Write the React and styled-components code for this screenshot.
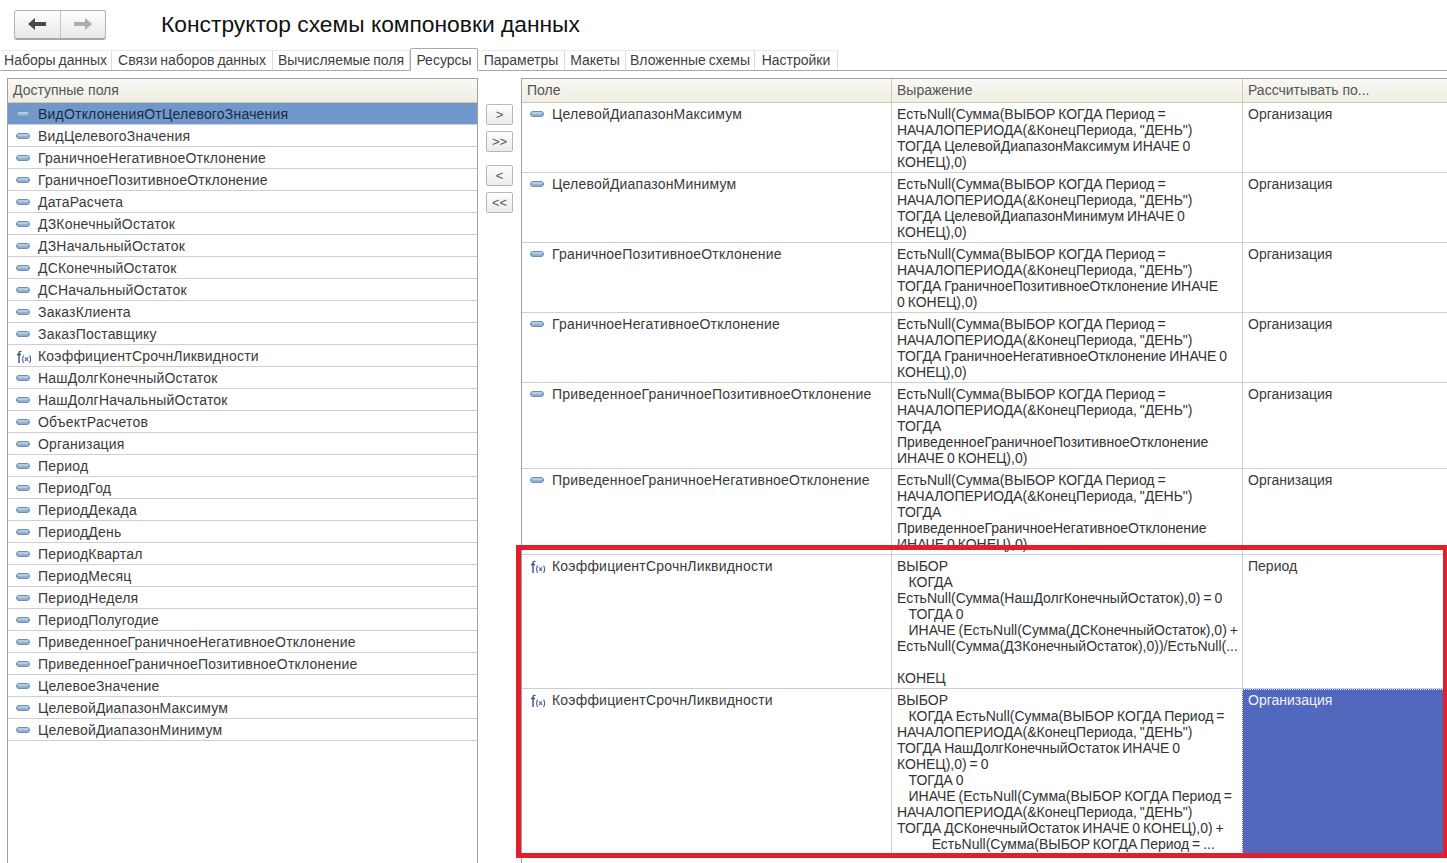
import React from "react";
import styled, { createGlobalStyle } from "styled-components";

const GlobalStyle = createGlobalStyle`
  html, body {
    margin: 0;
    padding: 0;
    background: #fff;
  }
  body {
    font-family: "Liberation Sans", Arial, sans-serif;
    font-size: 14px;
    color: #3a3a3a;
  }
`;

const Page = styled.div`
  position: relative;
  width: 1447px;
  height: 863px;
  overflow: hidden;
  background: #fff;
`;

const TopBar = styled.div`
  display: flex;
  align-items: center;
  height: 49px;
  padding: 0 0 0 14px;
  box-sizing: border-box;
`;

const NavGroup = styled.div`
  display: flex;
  width: 92px;
  height: 30px;
  box-sizing: border-box;
  border: 1px solid #b4b4b4;
  border-bottom: 2px solid #a8a8a8;
  border-radius: 3px;
  background: linear-gradient(#fdfdfd, #e9e9e9);
`;

const NavButton = styled.div`
  display: flex;
  align-items: center;
  justify-content: center;
  flex: 1;
  & + & {
    border-left: 1px solid #c4c4c4;
  }
`;

const Title = styled.h1`
  margin: 0 0 0 55px;
  font-size: 22.8px;
  font-weight: 400;
  color: #111;
`;

const TabBar = styled.div`
  display: flex;
  height: 22px;
  box-sizing: border-box;
  border-bottom: 1px solid #a9a9a9;
`;

const Tab = styled.div`
  box-sizing: border-box;
  height: 20px;
  margin-top: 1px;
  padding-top: 1px;
  width: ${(p) => p.$width}px;
  text-align: center;
  white-space: nowrap;
  line-height: 16px;
  word-spacing: -1px;
  color: #3f3f3f;
  background: #fff;
  border-top: 1px solid #ececec;
  border-right: 1px solid #dcdcdc;
  ${(p) =>
    p.$active &&
    `border: 1px solid #a9a9a9;
     border-bottom: 1px solid #fff;
     border-radius: 2px 2px 0 0;
     height: 23px;
     margin-top: -1px;
     padding-top: 3px;`}
`;

const Workspace = styled.div`
  display: flex;
  margin-top: 7px;
  padding-left: 7px;
  height: 785px;
`;

const LeftPanel = styled.div`
  flex: none;
  width: 471px;
  box-sizing: border-box;
  border-left: 1px solid #a0a0a0;
  border-right: 1px solid #a0a0a0;
  border-top: 1px solid #a0a0a0;
`;

const MoveColumn = styled.div`
  flex: none;
  width: 43px;
  padding: 26px 0 0 8px;
  box-sizing: border-box;
  display: flex;
  flex-direction: column;
  align-items: flex-start;
`;

const MoveButton = styled.div`
  width: 27px;
  height: 21px;
  margin-bottom: ${(p) => p.$gap}px;
  box-sizing: border-box;
  display: flex;
  align-items: center;
  justify-content: center;
  border: 1px solid #b8b8b8;
  border-radius: 2px;
  background: linear-gradient(#fdfdfd, #ececec);
  font-size: 13px;
  line-height: 16px;
  color: #555;
`;

const RightPanel = styled.div`
  flex: 1;
  box-sizing: border-box;
  border-left: 1px solid #a0a0a0;
  border-top: 1px solid #a0a0a0;
`;

const HeaderRow = styled.div`
  display: grid;
  grid-template-columns: ${(p) => p.$columns};
  height: 24px;
  box-sizing: border-box;
  border-bottom: 1px solid #cfcab0;
  background: linear-gradient(#f8f8f5, #f0ede2);
`;

const HeaderCell = styled.div`
  padding: 3px 5px 0;
  line-height: 16px;
  color: #555;
  & + & {
    border-left: 1px solid #cfcab0;
  }
`;

const ListRow = styled.div`
  display: flex;
  align-items: center;
  height: 22px;
  box-sizing: border-box;
  padding: 1px 0 0 8px;
  border-bottom: 1px solid #cfcfcf;
  letter-spacing: 0.2px;
  background: ${(p) => (p.$selected ? "#7098cd" : "#fff")};
  color: ${(p) => (p.$selected ? "#1f2a3a" : "#3a3a3a")};
`;

const IconSlot = styled.span`
  flex: none;
  display: inline-flex;
  align-items: center;
  width: 22px;
`;

const TableRow = styled.div`
  display: grid;
  grid-template-columns: 369px 351px 1fr;
  height: ${(p) => p.$height}px;
  box-sizing: border-box;
  border-bottom: 1px solid ${(p) => p.$line || "#cfcfcf"};
  overflow: hidden;
`;

const FieldCell = styled.div`
  display: flex;
  align-items: flex-start;
  padding: 3px 0 0 8px;
  line-height: 16px;
  white-space: nowrap;
  letter-spacing: 0.2px;
  & > span:first-child {
    height: 16px;
  }
`;

const ExprCell = styled.div`
  padding: 3px 5px 0;
  line-height: 16px;
  border-left: 1px solid #cfcfcf;
  white-space: pre;
  word-spacing: -1px;
  color: #333;
  overflow: hidden;
`;

const CalcCell = styled.div`
  padding: 3px 5px 0;
  line-height: 16px;
  border-left: 1px solid #cfcfcf;
  ${(p) =>
    p.$current &&
    `background: #5268be;
     color: #f1f3fb;
     border-left: 1px dotted #fff;
     border-top: 1px dotted #dfe4f5;
     padding-top: 2px;`}
`;

const Highlight = styled.div`
  position: absolute;
  left: 516px;
  top: 545px;
  width: 931px;
  height: 313px;
  box-sizing: border-box;
  border: 5px solid #e41e2b;
  border-right-width: 4px;
  pointer-events: none;
`;

const Attr = () => (
  <svg width="14" height="6" viewBox="0 0 14 6">
    <rect x="0.5" y="0.5" width="13" height="5" rx="2.5" fill="#8fb0d2" stroke="#6f8fb0" />
    <rect x="2" y="1.5" width="10" height="1" fill="#d8e6f3" />
  </svg>
);

const Fx = () => (
  <svg width="16" height="16" viewBox="0 0 16 16" fill="none">
    <path d="M5.5 3.6C4 3 3 3.6 3 5V15M1 6.5H5" stroke="#33558a" strokeWidth="1.4" />
    <path d="M7.6 7.5C6.4 9.8 6.4 12.7 7.6 15M13.6 7.5C14.8 9.8 14.8 12.7 13.6 15" stroke="#3f6096" strokeWidth="1.1" />
    <path d="M9 9.3L12.2 13M12.2 9.3L9 13" stroke="#6a7890" strokeWidth="1.2" />
  </svg>
);

const leftFields = [
  "ВидОтклоненияОтЦелевогоЗначения",
  "ВидЦелевогоЗначения",
  "ГраничноеНегативноеОтклонение",
  "ГраничноеПозитивноеОтклонение",
  "ДатаРасчета",
  "ДЗКонечныйОстаток",
  "ДЗНачальныйОстаток",
  "ДСКонечныйОстаток",
  "ДСНачальныйОстаток",
  "ЗаказКлиента",
  "ЗаказПоставщику",
  "КоэффициентСрочнЛиквидности",
  "НашДолгКонечныйОстаток",
  "НашДолгНачальныйОстаток",
  "ОбъектРасчетов",
  "Организация",
  "Период",
  "ПериодГод",
  "ПериодДекада",
  "ПериодДень",
  "ПериодКвартал",
  "ПериодМесяц",
  "ПериодНеделя",
  "ПериодПолугодие",
  "ПриведенноеГраничноеНегативноеОтклонение",
  "ПриведенноеГраничноеПозитивноеОтклонение",
  "ЦелевоеЗначение",
  "ЦелевойДиапазонМаксимум",
  "ЦелевойДиапазонМинимум",
];

const tabs = [
  ["Наборы данных", 112],
  ["Связи наборов данных", 161],
  ["Вычисляемые поля", 137],
  ["Ресурсы", 68],
  ["Параметры", 87],
  ["Макеты", 61],
  ["Вложенные схемы", 129],
  ["Настройки", 83],
];

const head = `ЕстьNull(Сумма(ВЫБОР КОГДА Период =
НАЧАЛОПЕРИОДА(&КонецПериода, "ДЕНЬ")
ТОГДА `;

const rows = [
  {
    name: "ЦелевойДиапазонМаксимум",
    height: 70,
    expr: `${head}ЦелевойДиапазонМаксимум ИНАЧЕ 0
КОНЕЦ),0)`,
    calc: "Организация",
  },
  {
    name: "ЦелевойДиапазонМинимум",
    height: 70,
    expr: `${head}ЦелевойДиапазонМинимум ИНАЧЕ 0
КОНЕЦ),0)`,
    calc: "Организация",
  },
  {
    name: "ГраничноеПозитивноеОтклонение",
    height: 70,
    expr: `${head}ГраничноеПозитивноеОтклонение ИНАЧЕ
0 КОНЕЦ),0)`,
    calc: "Организация",
  },
  {
    name: "ГраничноеНегативноеОтклонение",
    height: 70,
    expr: `${head}ГраничноеНегативноеОтклонение ИНАЧЕ 0
КОНЕЦ),0)`,
    calc: "Организация",
  },
  {
    name: "ПриведенноеГраничноеПозитивноеОтклонение",
    height: 86,
    expr: `${head}
ПриведенноеГраничноеПозитивноеОтклонение
ИНАЧЕ 0 КОНЕЦ),0)`,
    calc: "Организация",
  },
  {
    name: "ПриведенноеГраничноеНегативноеОтклонение",
    height: 86,
    expr: `${head}
ПриведенноеГраничноеНегативноеОтклонение
ИНАЧЕ 0 КОНЕЦ),0)`,
    calc: "Организация",
  },
  {
    name: "КоэффициентСрочнЛиквидности",
    height: 134,
    fx: true,
    line: "#bfcfe0",
    expr: `ВЫБОР
    КОГДА
ЕстьNull(Сумма(НашДолгКонечныйОстаток),0) = 0
    ТОГДА 0
    ИНАЧЕ (ЕстьNull(Сумма(ДСКонечныйОстаток),0) +
ЕстьNull(Сумма(ДЗКонечныйОстаток),0))/ЕстьNull(...

КОНЕЦ`,
    calc: "Период",
  },
  {
    name: "КоэффициентСрочнЛиквидности",
    height: 165,
    fx: true,
    current: true,
    expr: `ВЫБОР
    КОГДА ЕстьNull(Сумма(ВЫБОР КОГДА Период =
НАЧАЛОПЕРИОДА(&КонецПериода, "ДЕНЬ")
ТОГДА НашДолгКонечныйОстаток ИНАЧЕ 0
КОНЕЦ),0) = 0
    ТОГДА 0
    ИНАЧЕ (ЕстьNull(Сумма(ВЫБОР КОГДА Период =
НАЧАЛОПЕРИОДА(&КонецПериода, "ДЕНЬ")
ТОГДА ДСКонечныйОстаток ИНАЧЕ 0 КОНЕЦ),0) +
            ЕстьNull(Сумма(ВЫБОР КОГДА Период = ...`,
    calc: "Организация",
  },
];

const App = () => (
  <Page>
    <GlobalStyle />
    <TopBar>
      <NavGroup>
        <NavButton>
          <svg width="18" height="12" viewBox="0 0 18 12">
            <path d="M0 6L7 0V4H18V8H7V12Z" fill="#4a4a4a" />
          </svg>
        </NavButton>
        <NavButton>
          <svg width="18" height="12" viewBox="0 0 18 12">
            <path d="M18 6L11 0V4H0V8H11V12Z" fill="#adadad" />
          </svg>
        </NavButton>
      </NavGroup>
      <Title>Конструктор схемы компоновки данных</Title>
    </TopBar>
    <TabBar>
      {tabs.map(([label, width]) => (
        <Tab key={label} $width={width} $active={label === "Ресурсы"}>
          {label}
        </Tab>
      ))}
    </TabBar>
    <Workspace>
      <LeftPanel>
        <HeaderRow $columns="1fr">
          <HeaderCell>Доступные поля</HeaderCell>
        </HeaderRow>
        {leftFields.map((name, i) => (
          <ListRow key={name} $selected={i === 0}>
            <IconSlot>{name === "КоэффициентСрочнЛиквидности" ? <Fx /> : <Attr />}</IconSlot>
            {name}
          </ListRow>
        ))}
      </LeftPanel>
      <MoveColumn>
        <MoveButton $gap={6}>&gt;</MoveButton>
        <MoveButton $gap={13}>&gt;&gt;</MoveButton>
        <MoveButton $gap={6}>&lt;</MoveButton>
        <MoveButton $gap={0}>&lt;&lt;</MoveButton>
      </MoveColumn>
      <RightPanel>
        <HeaderRow $columns="369px 351px 1fr">
          <HeaderCell>Поле</HeaderCell>
          <HeaderCell>Выражение</HeaderCell>
          <HeaderCell>Рассчитывать по...</HeaderCell>
        </HeaderRow>
        {rows.map((row, i) => (
          <TableRow key={i} $height={row.height} $line={row.line}>
            <FieldCell>
              <IconSlot>{row.fx ? <Fx /> : <Attr />}</IconSlot>
              {row.name}
            </FieldCell>
            <ExprCell>{row.expr}</ExprCell>
            <CalcCell $current={row.current}>{row.calc}</CalcCell>
          </TableRow>
        ))}
      </RightPanel>
    </Workspace>
    <Highlight />
  </Page>
);

export default App;
